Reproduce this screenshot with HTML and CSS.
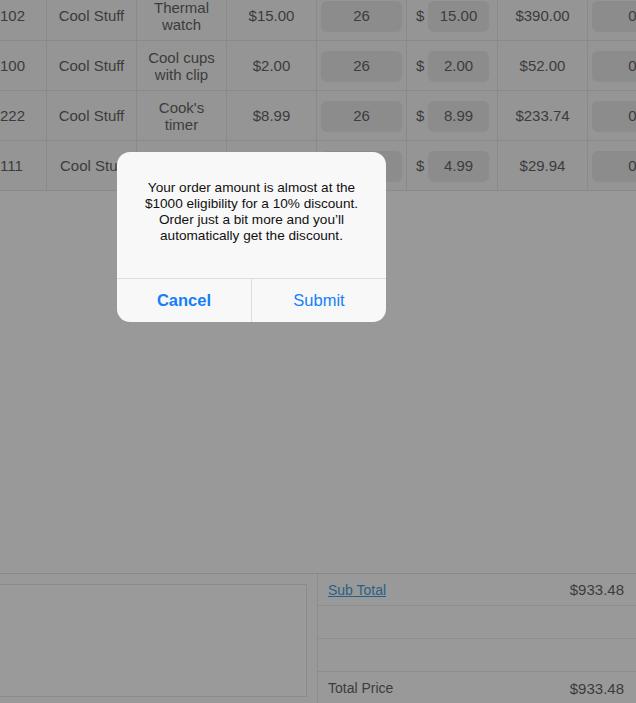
FILE: index.html
```html
<!DOCTYPE html>
<html>
<head>
<meta charset="utf-8">
<link rel="stylesheet" href="styles.css">
</head>
<body>
<div class="page">
  <div class="table">
    <div class="row">
      <div class="cell id">102</div>
      <div class="cell">Cool Stuff</div>
      <div class="cell two">Thermal<br>watch</div>
      <div class="cell">$15.00</div>
      <div class="cell"><span class="input qty">26</span></div>
      <div class="cell price"><span class="cur">$</span><span class="input pr">15.00</span></div>
      <div class="cell">$390.00</div>
      <div class="cell last"><span class="input qty">0</span></div>
    </div>
    <div class="row">
      <div class="cell id">100</div>
      <div class="cell">Cool Stuff</div>
      <div class="cell two">Cool cups<br>with clip</div>
      <div class="cell">$2.00</div>
      <div class="cell"><span class="input qty">26</span></div>
      <div class="cell price"><span class="cur">$</span><span class="input pr">2.00</span></div>
      <div class="cell">$52.00</div>
      <div class="cell last"><span class="input qty">0</span></div>
    </div>
    <div class="row">
      <div class="cell id">222</div>
      <div class="cell">Cool Stuff</div>
      <div class="cell two">Cook's<br>timer</div>
      <div class="cell">$8.99</div>
      <div class="cell"><span class="input qty">26</span></div>
      <div class="cell price"><span class="cur">$</span><span class="input pr">8.99</span></div>
      <div class="cell">$233.74</div>
      <div class="cell last"><span class="input qty">0</span></div>
    </div>
    <div class="row">
      <div class="cell id">111</div>
      <div class="cell clip"><span class="cliptext">Cool Stu</span></div>
      <div class="cell two"></div>
      <div class="cell"></div>
      <div class="cell"><span class="input qty"></span></div>
      <div class="cell price"><span class="cur">$</span><span class="input pr">4.99</span></div>
      <div class="cell">$29.94</div>
      <div class="cell last"><span class="input qty">0</span></div>
    </div>
  </div>
  <div class="spacer"></div>
  <div class="summary">
    <div class="notes"><div class="notebox"></div></div>
    <div class="totals">
      <div class="trow"><a class="link" href="#">Sub Total</a><span class="amt">$933.48</span></div>
      <div class="trow"></div>
      <div class="trow"></div>
      <div class="trow"><span class="label">Total Price</span><span class="amt">$933.48</span></div>
    </div>
  </div>
</div>
<div class="alert">
  <div class="msg">Your order amount is almost at the $1000 eligibility for a 10% discount. Order just a bit more and you’ll automatically get the discount.</div>
  <div class="buttons">
    <div class="btn bold">Cancel</div>
    <div class="btn">Submit</div>
  </div>
</div>
</body>
</html>
```
FILE: styles.css
```css
html, body {
  margin: 0;
  padding: 0;
  height: 100%;
  overflow: hidden;
}
body {
  background: #999999;
  font-family: "Liberation Sans", Arial, sans-serif;
  color: #3c3c3c;
  position: relative;
}
.page {
  height: 703px;
  display: flex;
  flex-direction: column;
  overflow: hidden;
}
.table {
  margin-top: -9px;
  background: #959595;
  width: 678px;
}
.row {
  display: grid;
  grid-template-columns: 47px 90px 90px 90px 90px 91px 90px 90px;
  height: 50px;
  border-bottom: 1px solid #8a8a8a;
  box-sizing: border-box;
}
.cell {
  display: flex;
  align-items: center;
  justify-content: center;
  text-align: center;
  font-size: 15px;
  border-right: 1px solid #8a8a8a;
  box-sizing: border-box;
}
.cell.id {
  justify-content: flex-start;
}
.cell.clip {
  justify-content: flex-start;
  padding-left: 13px;
}
.cell.two {
  line-height: 17px;
}
.cell.last {
  border-right: none;
  justify-content: flex-start;
  padding-left: 4px;
}
.cell.price {
  justify-content: flex-start;
  padding-left: 9px;
}
.cur {
  width: 12px;
  text-align: left;
}
.input {
  display: flex;
  align-items: center;
  justify-content: center;
  height: 30px;
  background: #8c8c8c;
  border-radius: 6px;
  box-shadow: 0 1px 1px rgba(0,0,0,0.06);
  font-size: 15px;
}
.input.qty {
  width: 81px;
}
.input.pr {
  width: 61px;
}
.spacer {
  flex: 1;
}
.summary {
  height: 129px;
  border-top: 1px solid #888;
  display: flex;
  flex-shrink: 0;
}
.notes {
  width: 318px;
  border-right: 1px solid #8d8d8d;
  padding: 10px 10px 0 0;
  box-sizing: border-box;
}
.notebox {
  height: 111px;
  border: 1px solid #8b8b8b;
  border-left: none;
  background: #9a9a9a;
}
.totals {
  flex: 1;
  display: flex;
  flex-direction: column;
}
.trow {
  height: 33px;
  flex-shrink: 0;
  border-bottom: 1px solid #8d8d8d;
  box-sizing: border-box;
  display: flex;
  align-items: center;
  justify-content: space-between;
  padding: 0 12px 0 10px;
  font-size: 14px;
}
.trow:first-child {
  height: 32px;
}
.link {
  color: #2b5f85;
  text-decoration: underline;
}
.amt {
  font-size: 15px;
}
.alert {
  position: absolute;
  left: 117px;
  top: 152px;
  width: 269px;
  height: 170px;
  background: #f8f8f8;
  border-radius: 13px;
  display: flex;
  flex-direction: column;
  overflow: hidden;
}
.msg {
  flex: 1;
  padding: 28px 12px 0;
  font-size: 13.6px;
  line-height: 16px;
  text-align: center;
  color: #111;
}
.buttons {
  height: 43px;
  border-top: 1px solid #dedede;
  display: flex;
}
.btn {
  flex: 1;
  display: flex;
  align-items: center;
  justify-content: center;
  font-size: 16.5px;
  color: #157efb;
}
.btn + .btn {
  border-left: 1px solid #dedede;
}
.btn.bold {
  font-weight: bold;
}
```
